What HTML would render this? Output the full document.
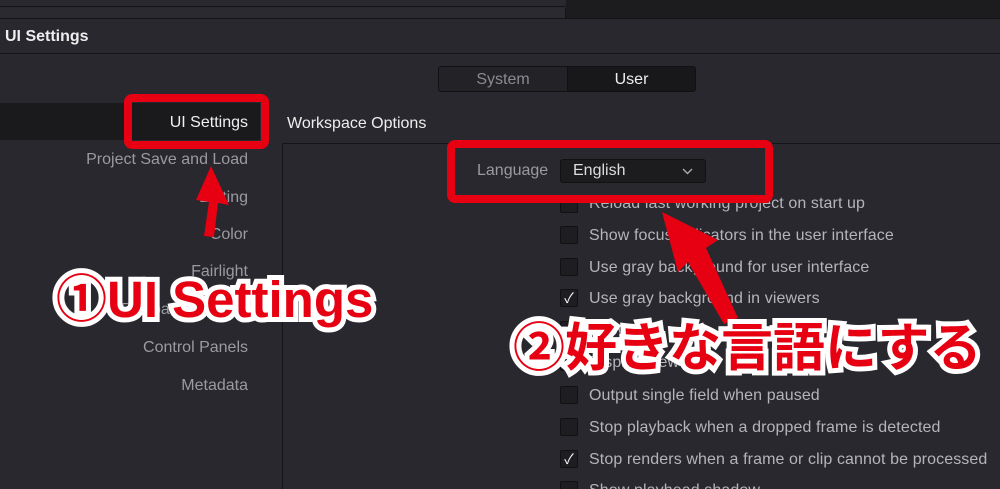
<!DOCTYPE html>
<html><head><meta charset="utf-8"><style>
*{margin:0;padding:0;box-sizing:border-box}
html,body{width:1000px;height:489px;overflow:hidden}
body{background:#28282e;font-family:"Liberation Sans","Noto Sans CJK JP",sans-serif;position:relative;color:#c8c8cc}
.a{position:absolute}
.side{position:absolute;right:752px;font-size:16px;color:#9a9aa0;white-space:nowrap}
.cb{position:absolute;left:560px;width:18px;height:18px;border:1px solid #111;background:#1e1e22;border-radius:2px;color:#fff;font-size:14px;line-height:16px;text-align:center}
.lb{position:absolute;left:589px;font-size:16px;color:#b4b4ba;white-space:nowrap;letter-spacing:0.1px}
.ann{position:absolute;font-weight:bold;color:#e60012;white-space:nowrap}
</style></head><body>
<div class="a" style="left:0;top:0;width:1000px;height:7px;background:#28282e;border-bottom:1px solid #151517"></div>
<div class="a" style="left:0;top:8px;width:566px;height:11px;background:#2a2a30;border-bottom:1px solid #151517;border-right:1px solid #151517"></div>
<div class="a" style="left:566px;top:0;width:434px;height:19px;background:#1c1c1e;border-bottom:1px solid #151517"></div>
<div class="a" style="left:0;top:19px;width:1000px;height:35px;background:#28282e;border-bottom:1px solid #151517"></div>
<div class="a" style="left:5px;top:28px;font-size:16px;font-weight:bold;color:#eee">UI Settings</div>
<div class="a" style="left:438px;top:66px;width:258px;height:26px;border:1px solid #111;border-radius:3px;background:#232327;overflow:hidden">
<div class="a" style="left:0;top:1px;width:128px;height:24px;text-align:center;font-size:16px;line-height:24px;color:#8a8a90">System</div>
<div class="a" style="left:128px;top:0;width:128px;height:24px;background:#18181a;border-left:1px solid #111;text-align:center;font-size:16px;line-height:26px;color:#eee">User</div></div>
<div class="a" style="left:0;top:103px;width:260px;height:37px;background:#1a1a1c"></div>
<div class="side" style="top:114px;color:#f0f0f0">UI Settings</div>
<div class="side" style="top:151px">Project Save and Load</div>
<div class="side" style="top:189px">Editing</div>
<div class="side" style="top:226px">Color</div>
<div class="side" style="top:263px">Fairlight</div>
<div class="side" style="top:301px">Playback Settings</div>
<div class="side" style="top:339px">Control Panels</div>
<div class="side" style="top:377px">Metadata</div>
<div class="a" style="left:287px;top:115px;font-size:16px;color:#eee">Workspace Options</div>
<div class="a" style="left:282px;top:143px;width:718px;height:346px;border-left:1px solid #151517;border-top:1px solid #151517"></div>
<div class="a" style="left:477px;top:162px;font-size:16px;color:#9a9aa0">Language</div>
<div class="a" style="left:560px;top:159px;width:146px;height:24px;background:#1c1c1e;border:1px solid #111;border-radius:3px;font-size:16px;line-height:22px;padding-left:12px;color:#ddd">English<svg style="position:absolute;right:12px;top:8px" width="11" height="7"><path d="M1 1 L5.5 5.5 L10 1" stroke="#aaa" stroke-width="1.4" fill="none"/></svg></div>
<div class="cb" style="top:195px"></div><div class="lb" style="top:195px">Reload last working project on start up</div>
<div class="cb" style="top:226px"></div><div class="lb" style="top:227px">Show focus indicators in the user interface</div>
<div class="cb" style="top:258px"></div><div class="lb" style="top:259px">Use gray background for user interface</div>
<div class="cb" style="top:289px">✓</div><div class="lb" style="top:290px">Use gray background in viewers</div>
<div class="cb" style="top:321px"></div><div class="lb" style="top:322px">Show ...</div>
<div class="cb" style="top:353px"></div><div class="lb" style="top:354px">Display viewer ...</div>
<div class="cb" style="top:386px"></div><div class="lb" style="top:387px">Output single field when paused</div>
<div class="cb" style="top:418px"></div><div class="lb" style="top:419px">Stop playback when a dropped frame is detected</div>
<div class="cb" style="top:450px">✓</div><div class="lb" style="top:451px">Stop renders when a frame or clip cannot be processed</div>
<div class="cb" style="top:481px"></div><div class="lb" style="top:482px">Show playhead shadow</div>
<svg class="a" style="left:0;top:0" width="1000" height="489">
<rect x="128" y="98" width="137" height="47" rx="4" fill="none" stroke="#e60012" stroke-width="8"/>
<rect x="451" y="144" width="318" height="55" rx="4" fill="none" stroke="#e60012" stroke-width="8"/>
<path d="M204 236 L209 202 L196 200 L211 166 L229 205 L218 203 L214 237 Z" fill="#e60012"/>
<path d="M724 324 L688 262 L678 272 L662 212 L718 240 L706 248 L738 318 Z" fill="#e60012"/>
</svg>
<div class="ann" style="left:56px;top:258px;font-size:51px;-webkit-text-stroke:10px #fff">①UI Settings</div>
<div class="ann" style="left:56px;top:258px;font-size:51px">①UI Settings</div>
<div class="ann" style="left:513px;top:306px;font-size:52px;-webkit-text-stroke:10px #fff">②好きな言語にする</div>
<div class="ann" style="left:513px;top:306px;font-size:52px">②好きな言語にする</div>
</body></html>
